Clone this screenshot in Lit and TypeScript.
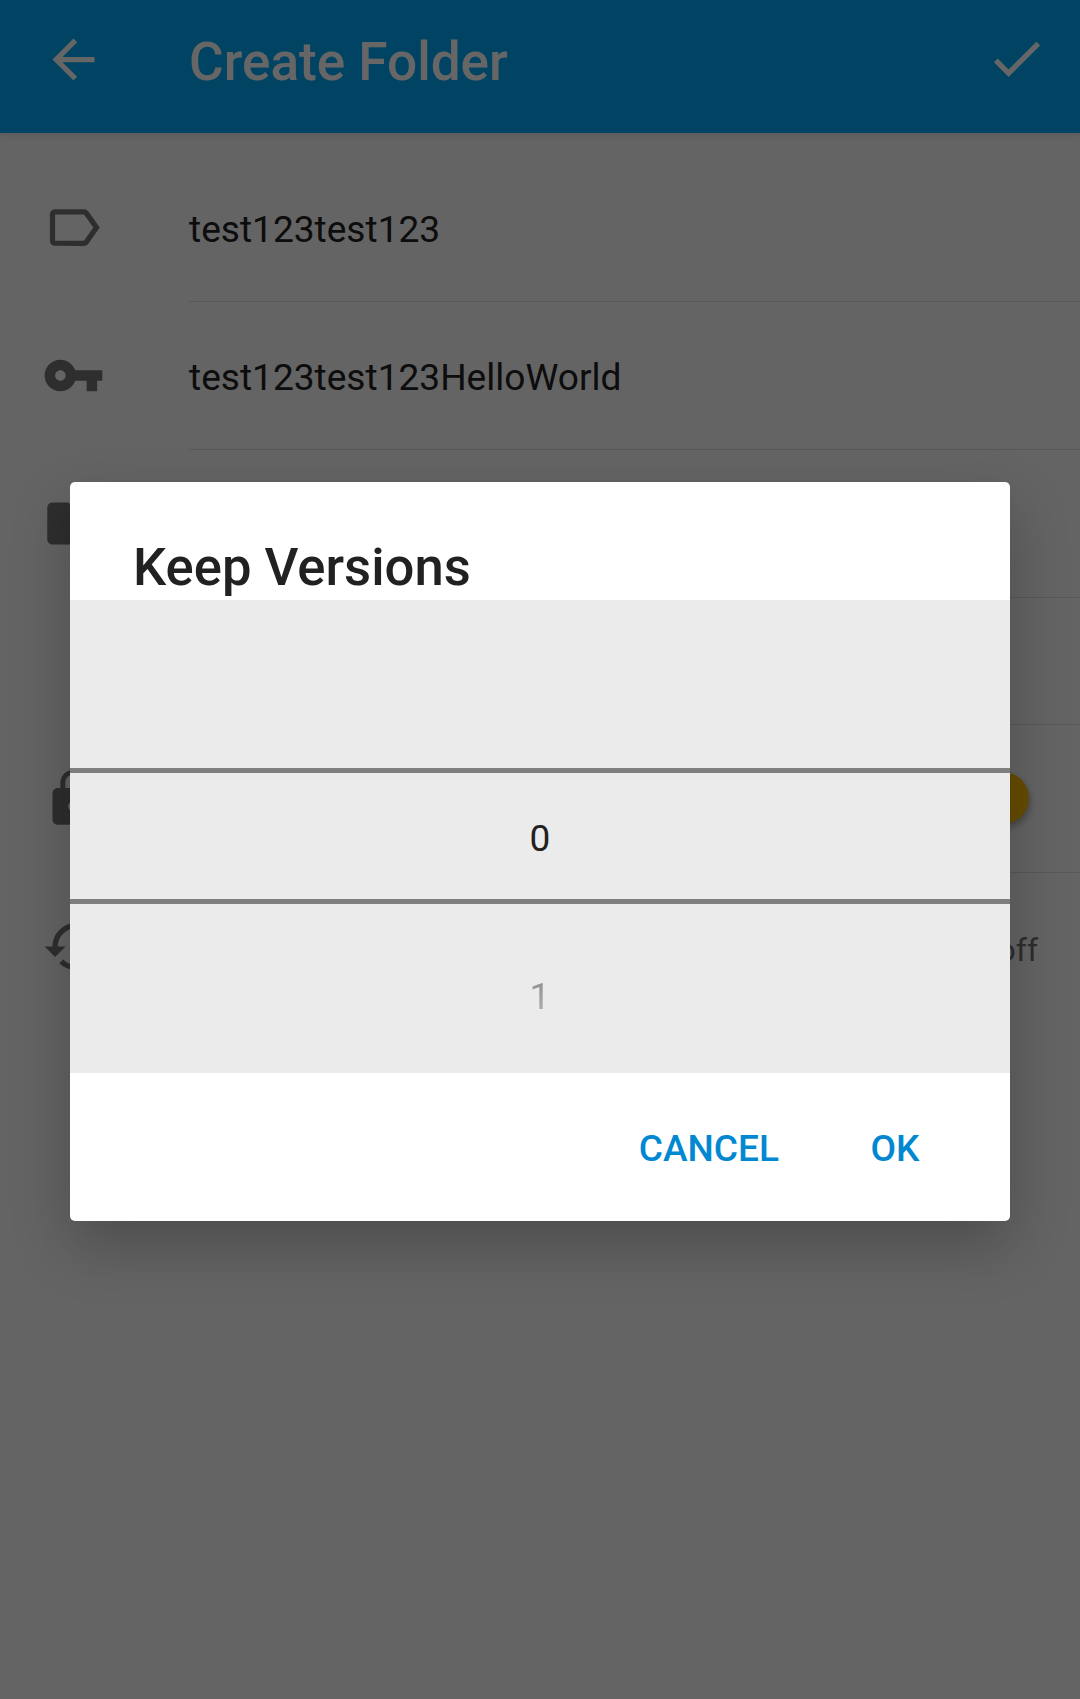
import { LitElement, html, css, svg, nothing } from "lit";
import { customElement, property } from "lit/decorators.js";

const ICONS: Record<string, string> = {
  back: "M20 11H7.83l5.59-5.59L12 4l-8 8 8 8 1.41-1.41L7.83 13H20v-2z",
  check: "M9 16.17L4.83 12l-1.42 1.41L9 19 21 7l-1.41-1.41z",
  label:
    "M17.63 5.84C17.27 5.33 16.67 5 16 5L5 5.01C3.9 5.01 3 5.9 3 7v10c0 1.1.9 1.99 2 1.99L16 19c.67 0 1.27-.33 1.63-.84L22 12l-4.37-6.16zM16 17H5V7h11l3.55 5L16 17z",
  key: "M12.65 10C11.83 7.67 9.61 6 7 6c-3.31 0-6 2.69-6 6s2.69 6 6 6c2.61 0 4.83-1.67 5.65-4H17v4h4v-4h2v-4H12.65zM7 14c-1.1 0-2-.9-2-2s.9-2 2-2 2 .9 2 2-.9 2-2 2z",
  folder:
    "M10 4H4c-1.1 0-1.99.9-1.99 2L2 18c0 1.1.9 2 2 2h16c1.1 0 2-.9 2-2V8c0-1.1-.9-2-2-2h-8l-2-2z",
  lock: "M18 8h-1V6c0-2.76-2.24-5-5-5S7 3.24 7 6v2H6c-1.1 0-2 .9-2 2v10c0 1.1.9 2 2 2h12c1.1 0 2-.9 2-2V10c0-1.1-.9-2-2-2zm-6 9c-1.1 0-2-.9-2-2s.9-2 2-2 2 .9 2 2-.9 2-2 2zm3.1-9H8.9V6c0-1.71 1.39-3.1 3.1-3.1 1.71 0 3.1 1.39 3.1 3.1v2z",
  history:
    "M13 3c-4.97 0-9 4.03-9 9H1l3.89 3.89.07.14L9 12H6c0-3.87 3.13-7 7-7s7 3.13 7 7-3.13 7-7 7c-1.93 0-3.68-.79-4.94-2.06l-1.42 1.42C8.27 19.99 10.51 21 13 21c4.97 0 9-4.03 9-9s-4.03-9-9-9zm-1 5v5l4.28 2.54.72-1.21-3.5-2.08V8H12z",
};

@customElement("md-icon")
class MdIcon extends LitElement {
  @property() name = "";

  static styles = css`
    :host {
      display: block;
      flex: none;
      width: 63px;
      height: 63px;
    }
    .glyph {
      display: block;
      width: 100%;
      height: 100%;
      fill: currentColor;
    }
  `;

  render() {
    return html`<svg class="glyph" viewBox="0 0 24 24">${svg`<path d=${ICONS[this.name] ?? ""}></path>`}</svg>`;
  }
}

@customElement("form-row")
class FormRow extends LitElement {
  @property() icon = "";

  static styles = css`
    :host {
      display: flex;
      align-items: stretch;
      height: 148px;
      box-sizing: border-box;
      padding-left: 42px;
    }
    :host([short]) {
      height: 127px;
    }
    .lead {
      width: 147px;
      flex: none;
      display: flex;
      align-items: center;
      box-sizing: border-box;
      padding-bottom: 2px;
      color: #737373;
    }
    .body {
      flex: 1;
      display: flex;
      align-items: center;
      border-bottom: 1px solid #dcdcdc;
      box-sizing: border-box;
      padding-top: 5px;
      color: #212121;
      font-size: 37.1px;
      line-height: 44px;
    }
    :host([last]) .body {
      border-bottom-color: transparent;
    }
  `;

  render() {
    return html`
      <div class="lead">${this.icon ? html`<md-icon name=${this.icon}></md-icon>` : nothing}</div>
      <div class="body"><slot></slot></div>
    `;
  }
}

@customElement("number-dialog")
class NumberDialog extends LitElement {
  static styles = css`
    :host {
      display: flex;
      flex-direction: column;
      width: 940px;
      height: 739px;
      background: #fff;
      border-radius: 5px;
      overflow: hidden;
      box-shadow: 0 24px 60px rgba(0, 0, 0, 0.24);
      color: #212121;
    }
    .title {
      height: 118px;
      box-sizing: border-box;
      padding: 54px 63px 0;
      font-size: 52.6px;
      font-weight: 500;
      line-height: 62px;
      white-space: nowrap;
    }
    .picker {
      height: 473px;
      display: grid;
      grid-template-rows: 168px 136px 169px;
      background: #ebebeb;
      font-size: 37px;
      line-height: 44px;
      text-align: center;
    }
    .current {
      border-top: 5px solid #7f7f7f;
      border-bottom: 5px solid #7f7f7f;
      padding-top: 44px;
    }
    .next {
      padding-top: 71px;
    }
    .faded {
      display: inline-block;
      -webkit-mask-image: linear-gradient(rgba(0, 0, 0, 0.47), rgba(0, 0, 0, 0.27));
      mask-image: linear-gradient(rgba(0, 0, 0, 0.47), rgba(0, 0, 0, 0.27));
    }
    .actions {
      flex: 1;
      display: flex;
      justify-content: flex-end;
      align-items: center;
      gap: 91.5px;
      padding: 4px 90.5px 0 0;
      color: #0288d1;
      font-size: 37.1px;
      font-weight: 500;
      line-height: 44px;
    }
  `;

  render() {
    return html`
      <div class="title">Keep Versions</div>
      <div class="picker">
        <div></div>
        <div class="current">0</div>
        <div class="next"><span class="faded">1</span></div>
      </div>
      <div class="actions"><span>CANCEL</span><span>OK</span></div>
    `;
  }
}

@customElement("app-root")
class AppRoot extends LitElement {
  static styles = css`
    :host {
      display: block;
      position: relative;
      width: 1080px;
      height: 1699px;
      overflow: hidden;
      background: #fafafa;
      font-family: Roboto, "Liberation Sans", sans-serif;
    }
    .bar {
      display: flex;
      align-items: center;
      height: 133px;
      box-sizing: border-box;
      padding: 0 32px 14px 42px;
      background: #03a9f4;
      color: #fff;
      box-shadow: 0 2px 8px rgba(0, 0, 0, 0.1);
    }
    .heading {
      flex: 1;
      padding: 4px 0 0 84px;
      font-size: 53.1px;
      font-weight: 500;
      line-height: 62px;
    }
    .confirm {
      padding-bottom: 2px;
    }
    .form {
      padding-top: 21px;
    }
    .thumb {
      width: 52px;
      height: 52px;
      margin: 0 51.5px 6px auto;
      border-radius: 50%;
      background: #ffc107;
      box-shadow: 1px 4px 7px rgba(0, 0, 0, 0.3);
    }
    .status {
      margin: 2px 42px 0 auto;
      font-size: 32px;
      color: #737373;
    }
    .scrim {
      position: absolute;
      inset: 0;
      display: flex;
      align-items: flex-start;
      justify-content: center;
      padding-top: 482px;
      background: rgba(0, 0, 0, 0.6);
    }
  `;

  render() {
    return html`
      <div class="bar">
        <md-icon name="back"></md-icon>
        <div class="heading">Create Folder</div>
        <md-icon class="confirm" name="check"></md-icon>
      </div>
      <div class="form">
        <form-row icon="label">test123test123</form-row>
        <form-row icon="key">test123test123HelloWorld</form-row>
        <form-row icon="folder"></form-row>
        <form-row short></form-row>
        <form-row icon="lock"><div class="thumb"></div></form-row>
        <form-row icon="history" last><div class="status">off</div></form-row>
      </div>
      <div class="scrim"><number-dialog></number-dialog></div>
    `;
  }
}
